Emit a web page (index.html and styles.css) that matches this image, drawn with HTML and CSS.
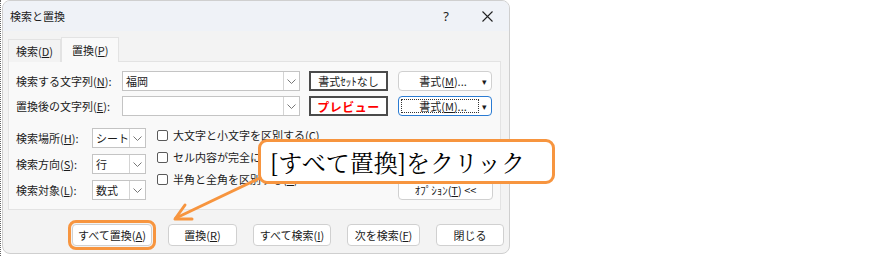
FILE: index.html
```html
<!DOCTYPE html>
<html lang="ja">
<head>
    <meta charset="UTF-8">
    <meta name="viewport" content="width=device-width, initial-scale=1.0">
    <title>検索と置換</title>
    <link rel="stylesheet" href="styles.css">
</head>

<body>
    <div class="desk">
        <div class="dialog">
            <div class="titlebar">
                <span class="title">検索と置換</span>
                <span class="help">?</span>
                <span class="close">
                    <svg width="11" height="11" viewBox="0 0 11 11">
                        <path d="M0.5 0.5 L10.5 10.5 M10.5 0.5 L0.5 10.5" stroke="#222" stroke-width="1.1" fill="none"/>
                    </svg>
                </span>
            </div>

            <div class="tabs">
                <div class="tab">検索(<u>D</u>)</div>
                <div class="tab active">置換(<u>P</u>)</div>
            </div>

            <div class="panel">
                <div class="find-grid">
                    <label>検索する文字列(<u>N</u>):</label>
                    <div class="combo">
                        <span class="value">福岡</span>
                        <span class="drop"><svg width="9" height="5" viewBox="0 0 9 5"><path d="M0.5 0.5 L4.5 4.5 L8.5 0.5" stroke="#777" fill="none"/></svg></span>
                    </div>
                    <div class="sample">書式ｾｯﾄなし</div>
                    <div class="fmt-btn">
                        <span class="fmt-label">書式(<u>M</u>)...</span>
                        <span class="caret">▾</span>
                    </div>

                    <label>置換後の文字列(<u>E</u>):</label>
                    <div class="combo">
                        <span class="value"></span>
                        <span class="drop"><svg width="9" height="5" viewBox="0 0 9 5"><path d="M0.5 0.5 L4.5 4.5 L8.5 0.5" stroke="#777" fill="none"/></svg></span>
                    </div>
                    <div class="sample preview">プレビュー</div>
                    <div class="fmt-btn focused">
                        <span class="fmt-label">書式(<u>M</u>)...</span>
                        <span class="caret">▾</span>
                    </div>
                </div>

                <div class="opts">
                    <div class="opt-left">
                        <label>検索場所(<u>H</u>):</label>
                        <div class="combo">
                            <span class="value">シート</span>
                            <span class="drop"><svg width="9" height="5" viewBox="0 0 9 5"><path d="M0.5 0.5 L4.5 4.5 L8.5 0.5" stroke="#777" fill="none"/></svg></span>
                        </div>
                        <label>検索方向(<u>S</u>):</label>
                        <div class="combo">
                            <span class="value">行</span>
                            <span class="drop"><svg width="9" height="5" viewBox="0 0 9 5"><path d="M0.5 0.5 L4.5 4.5 L8.5 0.5" stroke="#777" fill="none"/></svg></span>
                        </div>
                        <label>検索対象(<u>L</u>):</label>
                        <div class="combo">
                            <span class="value">数式</span>
                            <span class="drop"><svg width="9" height="5" viewBox="0 0 9 5"><path d="M0.5 0.5 L4.5 4.5 L8.5 0.5" stroke="#777" fill="none"/></svg></span>
                        </div>
                    </div>

                    <div class="checks">
                        <div class="check"><span class="box"></span>大文字と小文字を区別する(<u>C</u>)</div>
                        <div class="check"><span class="box"></span>セル内容が完全に同一であるものを検索する(<u>O</u>)</div>
                        <div class="check"><span class="box"></span>半角と全角を区別する(<u>B</u>)</div>
                    </div>

                    <div class="opt-btn">ｵﾌﾟｼｮﾝ(<u>T</u>) &lt;&lt;</div>
                </div>
            </div>

            <div class="footer">
                <div class="btn w1 marked">すべて置換(<u>A</u>)</div>
                <div class="btn w2">置換(<u>R</u>)</div>
                <div class="btn w3">すべて検索(<u>I</u>)</div>
                <div class="btn w4">次を検索(<u>F</u>)</div>
                <div class="btn w5">閉じる</div>
            </div>
        </div>

        <!-- annotation -->
        <div class="callout">[すべて置換]をクリック</div>
        <svg class="arrow" width="885" height="256" viewBox="0 0 885 256">
            <path d="M259 178 L175 218" stroke="#f7953f" stroke-width="3" fill="none" stroke-linecap="round"/>
            <path d="M184 205 L174 219 L191 219" stroke="#f7953f" stroke-width="3" fill="none" stroke-linecap="round" stroke-linejoin="round"/>
        </svg>
    </div>
</body>
</html>
```

FILE: styles.css
```css
* {
    margin: 0;
    padding: 0;
    box-sizing: border-box;
}

body {
    font-family: "Noto Sans CJK JP", "Noto Sans", sans-serif;
    font-size: 11px;
    color: #1b1b1b;
    background-color: #ffffff;
}

u {
    text-decoration-thickness: 1px;
    text-underline-offset: 1px;
}

.desk {
    position: relative;
    width: 885px;
    height: 256px;
    border-left: 1px dotted #666;
    padding-left: 1px;
}

.dialog {
    width: 508px;
    height: 254px;
    background-color: #f3f3f3;
    border: 1px solid #cfcfcf;
    border-radius: 8px;
    overflow: hidden;
}

/* title bar */
.titlebar {
    height: 30px;
    display: flex;
    align-items: center;
    background-color: #eff2f7;
    padding-left: 7px;
}

.title {
    font-size: 11px;
    line-height: 14px;
}

.help {
    margin-left: auto;
    font-family: "Noto Sans", sans-serif;
    font-size: 13px;
    margin-right: 33px;
}

.close {
    display: flex;
    margin-right: 16px;
}

/* tabs */
.tabs {
    display: flex;
    align-items: flex-end;
    padding-left: 5px;
    margin-top: 6px;
    margin-bottom: -1px;
    height: 25px;
}

.tab {
    height: 23px;
    padding: 0 7px;
    display: flex;
    align-items: center;
    font-size: 11px;
    border: 1px solid #e3e3e3;
    border-bottom: none;
    background-color: #f3f3f3;
}

.tab.active {
    height: 25px;
    padding: 0 10px;
    background-color: #f9f9f9;
    position: relative;
}

/* panel */
.panel {
    margin-left: 5px;
    width: 493px;
    height: 149px;
    background-color: #f9f9f9;
    border: 1px solid #e3e3e3;
    padding: 9px 7px 0 7px;
}

.find-grid {
    display: grid;
    grid-template-columns: 97px 178px 79px 95px;
    column-gap: 9px;
    row-gap: 5px;
    grid-auto-rows: 20px;
}

.find-grid .fmt-btn {
    margin-left: 1px;
}

label {
    display: flex;
    align-items: center;
    font-size: 11px;
    white-space: nowrap;
}

.combo {
    display: flex;
    background-color: #ffffff;
    border: 1px solid #c4c4c4;
}

.combo .value {
    flex: 1;
    display: flex;
    align-items: center;
    padding-left: 3px;
    font-size: 11px;
    white-space: nowrap;
    overflow: hidden;
}

.combo .drop {
    width: 16px;
    flex-shrink: 0;
    border-left: 1px solid #d4d4d4;
    display: flex;
    align-items: center;
    justify-content: center;
}

.sample {
    display: flex;
    align-items: center;
    justify-content: center;
    background-color: #ffffff;
    border: 2px solid #4b4b4b;
    font-size: 11px;
    white-space: nowrap;
}

.sample.preview {
    color: #ff0000;
    font-weight: bold;
    font-size: 12px;
    letter-spacing: 0.5px;
}

.fmt-btn {
    display: flex;
    align-items: center;
    background-color: #ffffff;
    border: 1px solid #d0d0d0;
    border-radius: 4px;
    font-size: 11px;
    padding: 2px;
}

.fmt-btn .fmt-label {
    flex: 1;
    height: 100%;
    display: flex;
    align-items: center;
    justify-content: center;
    padding-left: 6px;
}

.fmt-btn .caret {
    width: 10px;
    font-size: 9px;
    text-align: center;
}

.fmt-btn.focused {
    border-color: #2a7bd3;
}

.fmt-btn.focused .fmt-label {
    border: 1px dotted #333;
}

/* lower options */
.opts {
    display: flex;
    margin-top: 12px;
}

.opt-left {
    flex-shrink: 0;
    display: grid;
    grid-template-columns: 76px 54px;
    grid-auto-rows: 20px;
    row-gap: 6px;
}

.checks {
    flex: 1;
    min-width: 0;
    margin-left: 11px;
    margin-top: -4px;
    display: flex;
    flex-direction: column;
}

.check {
    height: 22px;
    display: flex;
    align-items: center;
    font-size: 11px;
    white-space: nowrap;
}

.check .box {
    width: 11px;
    height: 11px;
    flex-shrink: 0;
    border: 1px solid #5a5a5a;
    border-radius: 2px;
    background-color: #ffffff;
    margin-right: 5px;
}

.opt-btn {
    flex-shrink: 0;
    align-self: flex-end;
    width: 95px;
    height: 20px;
    display: flex;
    align-items: center;
    justify-content: center;
    background-color: #ffffff;
    border: 1px solid #d0d0d0;
    border-radius: 4px;
    font-size: 11px;
    white-space: nowrap;
}

/* bottom buttons */
.footer {
    display: flex;
    justify-content: space-between;
    padding: 0 5px 0 69px;
    margin-top: 14px;
}

.btn {
    height: 22px;
    display: flex;
    align-items: center;
    justify-content: center;
    background-color: #ffffff;
    border: 1px solid #d0d0d0;
    border-radius: 4px;
    font-size: 11px;
}

.w1 { width: 80px; }
.w2 { width: 69px; }
.w3 { width: 78px; }
.w4 { width: 73px; }
.w5 { width: 68px; }

.btn.marked {
    outline: 3px solid #f7953f;
    outline-offset: 1px;
}

/* annotation */
.callout {
    position: absolute;
    left: 257px;
    top: 139px;
    width: 297px;
    height: 45px;
    background-color: #ffffff;
    border: 3px solid #f7953f;
    border-radius: 9px;
    display: flex;
    align-items: center;
    padding-left: 9px;
    font-family: "Noto Serif CJK JP", "Liberation Serif", "Noto Sans CJK JP", serif;
    font-size: 24px;
    color: #000000;
    white-space: nowrap;
}

.arrow {
    position: absolute;
    left: 0;
    top: 0;
    pointer-events: none;
}
```
